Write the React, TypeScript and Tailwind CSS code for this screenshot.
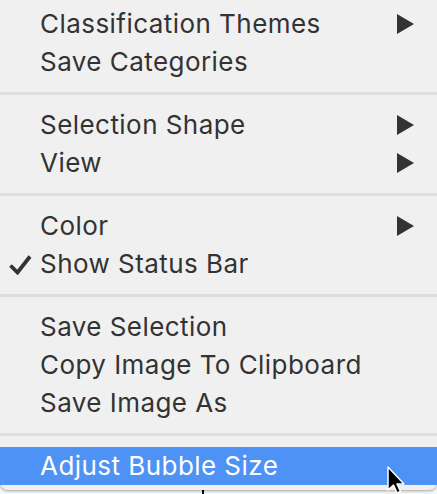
import React from "react";

type Item = { label: string; sub?: boolean; checked?: boolean; active?: boolean };

const groups: Item[][] = [
  [{ label: "Classification Themes", sub: true }, { label: "Save Categories" }],
  [{ label: "Selection Shape", sub: true }, { label: "View", sub: true }],
  [{ label: "Color", sub: true }, { label: "Show Status Bar", checked: true }],
  [
    { label: "Save Selection" },
    { label: "Copy Image To Clipboard" },
    { label: "Save Image As" },
  ],
  [{ label: "Adjust Bubble Size", active: true }],
];

function Arrow() {
  return (
    <svg viewBox="0 0 17 20" className="h-[20px] w-[17px]" aria-hidden>
      <path d="M0 0 L17 10 L0 20 Z" fill="currentColor" />
    </svg>
  );
}

function Check() {
  return (
    <svg viewBox="0 0 23 20" className="h-[20px] w-[23px]" aria-hidden>
      <path
        d="M1.5 10.5 L8.5 17.5 L21 1.5"
        fill="none"
        stroke="currentColor"
        strokeWidth="3.8"
        strokeLinecap="butt"
        strokeLinejoin="miter"
      />
    </svg>
  );
}

function Row({ item }: { item: Item }) {
  return (
    <div
      className={`relative flex h-[38px] items-center pl-[40px] pr-[23px] ${
        item.active ? "bg-[#4e92f5] text-white" : "text-[#333333]"
      }`}
    >
      {item.checked && (
        <span className="absolute left-[9px] top-[10px]">
          <Check />
        </span>
      )}
      <span className="flex-1 text-[26px] leading-none tracking-[0.45px]">{item.label}</span>
      {item.sub && <Arrow />}
    </div>
  );
}

export default function App() {
  return (
    <div
      className="relative h-[494px] w-[437px] overflow-hidden bg-[#f7f7f7]"
      style={{ fontFamily: "Inter, 'Liberation Sans', sans-serif" }}
    >
      {/* background content below the menu */}
      <div className="absolute left-[202px] top-[486px] h-[10px] w-[2px] bg-black" />

      <div className="relative rounded-b-[8px] bg-[#f0f0f0] pt-[5px] pb-[5px] shadow-[0_1px_3px_rgba(0,0,0,0.35)]">
        {groups.map((g, gi) => (
          <div key={gi}>
            {gi > 0 && <div className="my-[11px] h-[3px] bg-[#dddddd]" />}
            {g.map((it) => (
              <Row key={it.label} item={it} />
            ))}
          </div>
        ))}
      </div>

      {/* mouse pointer */}
      <svg
        viewBox="0 0 20 30"
        className="absolute left-[386px] top-[466px] h-[30px] w-[20px]"
        aria-hidden
      >
        <path
          d="M2 1 L2 24 L7.5 19 L11 27 L14.5 25.5 L11 18 L18 18 Z"
          fill="black"
          stroke="white"
          strokeWidth="1.5"
          strokeLinejoin="round"
        />
      </svg>
    </div>
  );
}
